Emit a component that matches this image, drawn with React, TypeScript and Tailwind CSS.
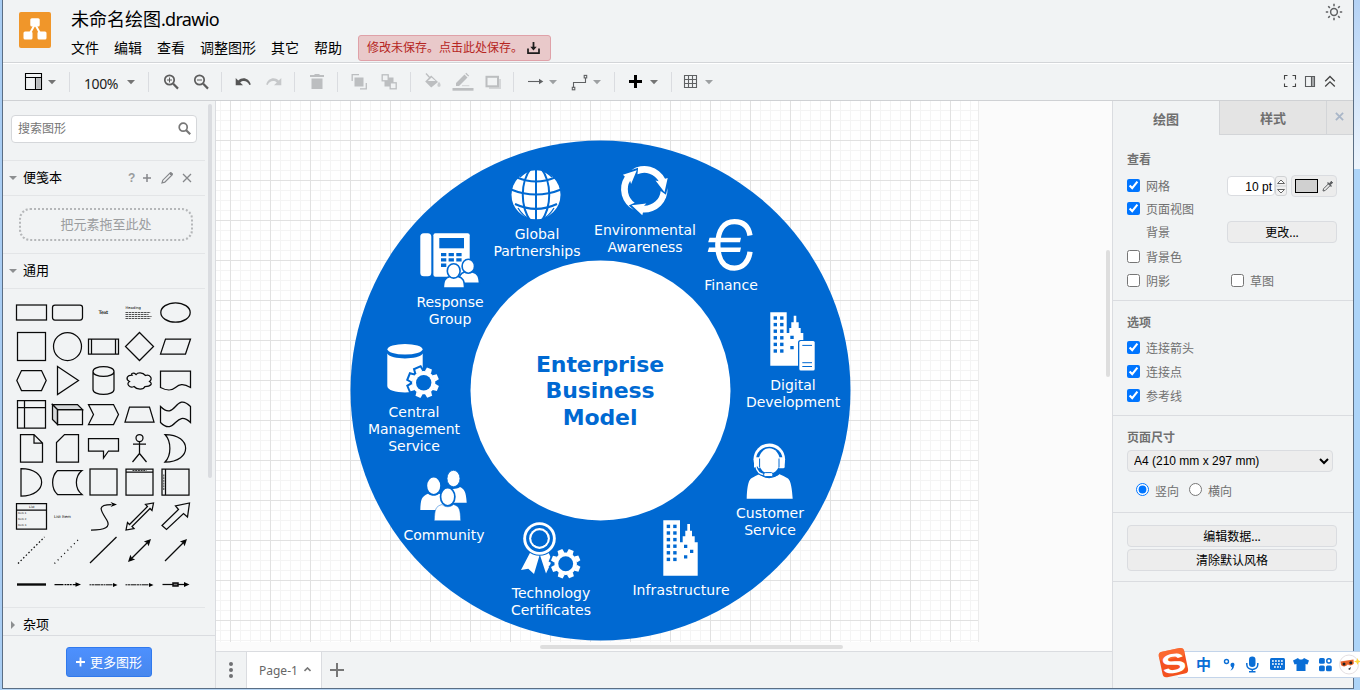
import React from 'react';

const BLUE = '#0069d2';

interface NodeLabel {
  lines: string[];
  place: string;
}

const nodeLabels: NodeLabel[] = [
  { lines: ['Global', 'Partnerships'], place: 'left-[261px] top-[125px]' },
  { lines: ['Environmental', 'Awareness'], place: 'left-[369px] top-[121px]' },
  { lines: ['Finance'], place: 'left-[455px] top-[176px]' },
  { lines: ['Digital', 'Development'], place: 'left-[517px] top-[276px]' },
  { lines: ['Customer', 'Service'], place: 'left-[494px] top-[404px]' },
  { lines: ['Infrastructure'], place: 'left-[405px] top-[481px] tracking-[0.1px]' },
  { lines: ['Technology', 'Certificates'], place: 'left-[275px] top-[484px]' },
  { lines: ['Community'], place: 'left-[168px] top-[426px]' },
  { lines: ['Central', 'Management', 'Service'], place: 'left-[138px] top-[303px]' },
  { lines: ['Response', 'Group'], place: 'left-[174px] top-[193px]' },
];

// Toolbar icon, drawn around its own centre
const Icon = ({ children, className = '' }: { children: React.ReactNode; className?: string }) => (
  <svg className={`shrink-0 ${className}`} width="26" height="36" viewBox="-13 -18 26 36" fill="none" stroke="none">
    {children}
  </svg>
);

const Caret = ({ color = '#747474', className = '' }: { color?: string; className?: string }) => (
  <svg className={`shrink-0 ${className}`} width="8" height="36" viewBox="-4 -18 8 36">
    <path d="M-4 -2H4L0 2.3Z" fill={color} />
  </svg>
);

const Group = ({ children, className }: { children: React.ReactNode; className: string }) => (
  <div className={`flex h-9 shrink-0 items-center ${className}`}>{children}</div>
);

const Separator = () => <div className="h-5 w-px shrink-0 bg-[#dadce0]" />;

const Header = () => (
  <header className="flex h-[63px] shrink-0 border-b border-[#d3d5d8] pl-4">
    <svg className="mt-3 shrink-0" width="32" height="36" viewBox="0 0 32 36">
      <rect width="32" height="36" rx="2" fill="#f0962a" />
      <path d="M16 12L9 25M16 12L23 25" stroke="#fff" strokeWidth="2" />
      <rect x="11.3" y="6.3" width="9.4" height="8.2" rx="1.5" fill="#fff" />
      <rect x="4.5" y="19.5" width="9" height="8" rx="1.5" fill="#fff" />
      <rect x="18.5" y="19.5" width="9" height="8" rx="1.5" fill="#fff" />
    </svg>
    <div className="ml-5 flex flex-col">
      <div className="mt-1 h-[31px] text-[18px] leading-[31px] text-black">
        未命名绘图<span className="tracking-[-0.7px]">.drawio</span>
      </div>
      <nav className="flex h-[26px] items-center gap-[15px] text-[14px] leading-none text-black">
        <span>文件</span>
        <span>编辑</span>
        <span>查看</span>
        <span>调整图形</span>
        <span>其它</span>
        <span>帮助</span>
        <div className="ml-px flex h-[26px] w-[193px] items-center rounded-[3px] border border-[#dfa1a8] bg-[#e9c9ca] pl-2 text-[12px] text-[#b62623]">
          <span>修改未保存。点击此处保存。</span>
          <svg className="ml-1" width="13" height="14" viewBox="0 0 13 14" fill="none" stroke="#1c1c1c">
            <path d="M1 7.5V12.2H12V7.5" strokeWidth="1.7" />
            <path d="M6.5 1V8" strokeWidth="1.8" />
            <path d="M3.3 5.8H9.7L6.5 9.6Z" fill="#1c1c1c" stroke="none" />
          </svg>
        </div>
      </nav>
    </div>
    <svg className="ml-auto mr-[10px] mt-[3px]" width="18" height="18" viewBox="-9 -9 18 18" fill="none" stroke="#5f6163" strokeWidth="1.5">
      <circle r="3.4" />
      {[0, 45, 90, 135, 180, 225, 270, 315].map((angle) => (
        <path key={angle} d="M0 -5.8V-8.2" transform={`rotate(${angle})`} />
      ))}
    </svg>
  </header>
);

const Toolbar = () => (
  <div className="flex h-[38px] shrink-0 items-center border-b border-[#cfd1d4] border-t border-t-white">
    <Group className="w-[66px] pl-[17px]">
      <Icon>
        <path d="M-7.5 -8.5H8.5V7.5H-7.5ZM-7.5 -4.5H8.5M2.5 -4.5V7.5" stroke="#000" strokeWidth="1.1" />
        <rect x="3.2" y="-4" width="4.6" height="10.8" fill="#b9bbbd" />
      </Icon>
      <Caret className="ml-[2px]" />
    </Group>
    <Separator />
    <Group className="w-[78px] pl-[14px]">
      <span className="w-[43px] pt-[3px] text-[14px] tracking-[-0.4px] text-[#222]">100%</span>
      <Caret />
    </Group>
    <Separator />
    <Group className="w-[72px] gap-1 pl-[9px]">
      <Icon>
        <circle cx="-1.5" cy="-2" r="4.7" stroke="#5c5c5c" strokeWidth="1.7" />
        <path d="M2.2 1.8L7 6.6" stroke="#5c5c5c" strokeWidth="2.2" />
        <path d="M-4 -2H1M-1.5 -4.5V.5" stroke="#5c5c5c" />
      </Icon>
      <Icon>
        <circle cx="-1.5" cy="-2" r="4.7" stroke="#5c5c5c" strokeWidth="1.7" />
        <path d="M2.2 1.8L7 6.6" stroke="#5c5c5c" strokeWidth="2.2" />
        <path d="M-4 -2H1" stroke="#5c5c5c" />
      </Icon>
    </Group>
    <Separator />
    <Group className="w-[72px] gap-[5px] pl-2">
      <Icon>
        <path d="M-7.3 -4V3.3H0L-2.8 .4C0 -2 4.5 -1.5 6.4 3.1L7.8 2.4C6 -3.6 0 -5.6 -4.8 -1.6Z" fill="#555" />
      </Icon>
      <Icon>
        <path d="M7.3 -4V3.3H0L2.8 .4C0 -2 -4.5 -1.5 -6.4 3.1L-7.8 2.4C-6 -3.6 0 -5.6 4.8 -1.6Z" fill="#c6c8ca" />
      </Icon>
    </Group>
    <Separator />
    <Group className="w-[42px] pl-[9px]">
      <Icon>
        <path d="M-7 -7H-3L-2 -8H2L3 -7H7V-5H-7ZM-5.5 -3.5H5.5V7H-5.5Z" fill="#bcbec0" />
      </Icon>
    </Group>
    <Separator />
    <Group className="w-[72px] gap-1 pl-2">
      <Icon>
        <rect x="-4.5" y="-4.5" width="9" height="9" fill="#bcbec0" />
        <path d="M-6.8 -1V-7.3H0M7.3 1V6.8H1" stroke="#bcbec0" strokeWidth="1.3" />
      </Icon>
      <Icon>
        <rect x="-4.5" y="-4.5" width="9" height="9" fill="#bcbec0" />
        <rect x="-6.8" y="-7.2" width="6" height="6" fill="#f1f3f4" stroke="#bcbec0" strokeWidth="1.3" />
        <rect x="1.2" y=".8" width="6" height="6" fill="#f1f3f4" stroke="#bcbec0" strokeWidth="1.3" />
      </Icon>
    </Group>
    <Separator />
    <Group className="w-[102px] gap-1 pl-[9px]">
      <Icon>
        <path d="M-1.8 -6.5L5 0L-1.8 5.5L-7.8 -.5Z" fill="#bcbec0" />
        <path d="M-7 -8.5L-2 -3" stroke="#bcbec0" strokeWidth="1.3" />
        <path d="M-1.5 -4.6L2.5 -1H-5.2Z" fill="#f1f3f4" />
        <path d="M6 -.3C8.2 2.2 8 4.8 6 4.8S3.8 2.2 6 -.3Z" fill="#cbcdcf" />
      </Icon>
      <Icon>
        <path d="M-7 4V1L1.5 -7.5L4.5 -4.5L-4 4ZM2.3 -8.3L3.3 -9.2L6.2 -6.3L5.3 -5.4Z" fill="#bcbec0" />
        <path d="M-1 3.7H6.3" stroke="#d0d2d4" />
        <rect x="-10.5" y="6" width="21" height="2.7" fill="#bcbec0" />
      </Icon>
      <Icon>
        <rect x="-4" y="-3" width="12" height="10" fill="#d4d6d8" />
        <rect x="-6.5" y="-5.2" width="11.5" height="9.5" fill="#f1f3f4" stroke="#bcbec0" strokeWidth="2" />
      </Icon>
    </Group>
    <Separator />
    <Group className="w-[100px] pl-2">
      <Icon>
        <path d="M-7 -.5H5" stroke="#5f6163" strokeWidth="1.1" />
        <path d="M4 -3.2L8.3 -.5L4 2.2Z" fill="#5f6163" />
      </Icon>
      <Caret className="ml-px" color="#9da0a2" />
      <Icon className="ml-[9px]">
        <path d="M-5.5 5.5V.5H6.5V-4" stroke="#5f6163" strokeWidth="1.1" />
        <rect x="-6.7" y="5.3" width="2.5" height="2.5" stroke="#5f6163" strokeWidth="1.1" />
        <rect x="5.2" y="-6.6" width="2.5" height="2.5" stroke="#5f6163" strokeWidth="1.1" />
      </Icon>
      <Caret className="ml-px" color="#9da0a2" />
    </Group>
    <Separator />
    <Group className="w-[56px] pl-[7px]">
      <Icon>
        <path d="M-6 -.5H7M.5 -7V6" stroke="#000" strokeWidth="3" />
      </Icon>
      <Caret className="ml-[2px]" />
    </Group>
    <Separator />
    <Group className="w-[44px] pl-[6px]">
      <Icon>
        <path d="M-6.5 -6.5H5.5V5.5H-6.5ZM-6.5 -2.5H5.5M-6.5 1.5H5.5M-2.5 -6.5V5.5M1.5 -6.5V5.5" stroke="#5f6163" strokeWidth="1.1" />
      </Icon>
      <Caret className="ml-px" color="#9da0a2" />
    </Group>
    <div className="ml-auto mr-[10px] flex">
      <Icon className="-mr-[6px]">
        <path d="M-5.5 -2.5V-6.5H-2.5M2.5 -6.5H5.5V-2.5M5.5 1.5V4.5H2.5M-2.5 4.5H-5.5V1.5" stroke="#444" strokeWidth="1.1" />
      </Icon>
      <Icon className="-mr-[6px]">
        <rect x="1.5" y="-5" width="3" height="9" fill="#a7a9ab" />
        <path d="M-4.5 -5.5H4.5V4.5H-4.5ZM1.5 -5.5V4.5" stroke="#5a5c5e" strokeWidth="1.1" />
      </Icon>
      <Icon>
        <path d="M-4.8 -.8L0 -5.5L4.8 -.8M-4.8 4.5L0 -.2L4.8 4.5" stroke="#444" strokeWidth="1.3" />
      </Icon>
    </div>
  </div>
);

// Small captions inside the palette thumbnails
const tiny = "font-['DejaVu_Sans']";

const palette: React.ReactNode[] = [
  <rect x="-15" y="-7.5" width="30" height="15" />,
  <rect x="-15" y="-7.5" width="30" height="15" rx="2.5" />,
  <text className={tiny} y="1.5" fontSize="4.6" textAnchor="middle" fill="#000" stroke="#000" strokeWidth=".15">Text</text>,
  <g>
    <text className={tiny} x="-14" y="-4" fontSize="3.7" fill="#000" stroke="none">Heading</text>
    <path d="M-14 0H11M-14 2H9M-14 4H12M-14 6H11" strokeDasharray="2.5 .6" strokeWidth=".7" />
  </g>,
  <ellipse rx="14.7" ry="9.7" />,
  <rect x="-14" y="-14" width="28" height="28" />,
  <circle r="14" />,
  <path d="M-15 -7.5H15V7.5H-15ZM-12 -7.5V7.5M12 -7.5V7.5" />,
  <path d="M0 -14L14 0L0 14L-14 0Z" />,
  <path d="M-10 -7.5H15L10 7.5H-15Z" />,
  <path d="M-10 -10H10L14.7 0L10 10H-10L-14.7 0Z" />,
  <path d="M-10 -14L11 0L-10 14Z" />,
  <path d="M-10.5 -9C-10.5 -15.5 10.5 -15.5 10.5 -9V9C10.5 15.5 -10.5 15.5 -10.5 9ZM-10.5 -9C-10.5 -2.5 10.5 -2.5 10.5 -9" />,
  <path d="M-7.5 -5.5C-13 -5.5 -14 -1 -10 1C-14 3.5 -9.5 8 -5.5 6C-2.5 9.5 4 9.5 5.5 6C11.5 6 13.5 3 10 1C14 -2 10 -6.5 6 -5C3 -8.5 -2 -8 -3.5 -6C-5.5 -8 -9 -7.5 -7.5 -5.5Z" />,
  <path d="M-15 -9.5H15V7C7.5 2.5 3.7 4 0 7S-7.5 11 -15 7Z" />,
  <path d="M-14 -14H14V13.5H-14ZM-14 -7H14M-7 -14V13.5" />,
  <g>
    <path d="M-15 -10H10L15 -5H-10ZM-15 -10L-10 -5V10L-15 5Z" fill="#d6d8da" />
    <path d="M-10 -5H15V10H-10Z" />
  </g>,
  <path d="M-15 -10H10L15 0L10 10H-15L-10 0Z" />,
  <path d="M-10 -7.5H10L14.5 7.5H-14.5Z" />,
  <path d="M-15 -8C-7.5 -.5 -3.5 -4 0 -8S7.5 -15.5 15 -8V8C7.5 1 3.5 4.5 0 8S-7.5 15.5 -15 8Z" />,
  <path d="M-11 -14H2.5L11 -5.5V13.5H-11ZM2.5 -14V-5.5H11" />,
  <path d="M-3 -14H11V13.5H-11V-6Z" />,
  <path d="M-15 -10H15V2.5H5L0 9.5V2.5H-15Z" />,
  <path d="M0 -7V5M-6.5 -4.5H6.5M0 5L-7 13.5M0 5L7 13.5M3.5 -10.5A3.5 3.5 0 1 1 -3.5 -10.5A3.5 3.5 0 1 1 3.5 -10.5" />,
  <path d="M-10.5 -14C17 -14 17 13.5 -10.5 13.5C-4 7 -4 -7 -10.5 -14Z" />,
  <path d="M-10.5 -14C17 -14 17 13.5 -10.5 13.5Z" />,
  <path d="M-10 -12H14.5C7 -6 7 6 14.5 12H-10C-16.5 6 -16.5 -6 -10 -12Z" />,
  <rect x="-13.5" y="-13.5" width="27" height="26" />,
  <g>
    <path d="M-13.5 -13.5H13.5V12.5H-13.5ZM-13.5 -10.5H13.5" />
    <path d="M-7 -12H7" strokeDasharray="2 .7" strokeWidth=".8" />
  </g>,
  <g>
    <path d="M-13.5 -13.5H13.5V12.5H-13.5ZM-10 -13.5V12.5" />
    <path d="M-11.7 -8V8" strokeDasharray="2 .7" strokeWidth=".8" />
  </g>,
  <g>
    <path d="M-15 -13H15V12.5H-15ZM-15 -6.5H15" />
    <g className={tiny} fill="#000" stroke="none" fontSize="3.2">
      <text x="-2.5" y="-9">List</text>
      <text x="-13.5" y="-2.5" fontSize="2.6">Item 1</text>
      <text x="-13.5" y="3.5" fontSize="2.6">Item 2</text>
      <text x="-13.5" y="9.5" fontSize="2.6">Item 3</text>
    </g>
  </g>,
  <text className={tiny} x="-13.5" y="1" fontSize="3.9" fill="#000" stroke="none">List Item</text>,
  <g>
    <path d="M-12.5 13.5C1 13.5 8 11 3 3S-8 -12 8 -12" />
    <path d="M13.5 -12L7 -14.5L9 -12L7 -9.5Z" fill="#000" stroke="none" />
  </g>,
  <path d="M-13.5 13.5L-12 6L-10 8L8 -10L6 -12L14 -13.5L12.5 -6L10.5 -8L-7.5 10L-5.5 12Z" />,
  <path d="M-13.5 9L3 -7L0 -10.5L14 -13.5L12 .5L8 -3L-9 13Z" />,
  <path d="M-13.5 13L13 -13.5" strokeDasharray="1.5 2.2" />,
  <path d="M-13 13L13 -13" strokeDasharray="1 3.6" />,
  <path d="M-13.5 12.5L13 -13.5" />,
  <g>
    <path d="M-9 9L9 -9" />
    <path d="M-10.5 10.5L-9 6L-8 8L-6 9ZM10.5 -10.5L9 -6L8 -8L6 -9Z" fill="#000" />
  </g>,
  <g>
    <path d="M-10.5 10.5L9 -9" />
    <path d="M10.5 -10.5L9 -6L8 -8L6 -9Z" fill="#000" />
  </g>,
  <path d="M-14.5 0H14.5" strokeWidth="2.4" />,
  <g>
    <path d="M-13 0H9" strokeDasharray="9 1 2 .6 2 .6 2 1 9" />
    <path d="M13.5 0L8 -2.3V2.3Z" fill="#000" stroke="none" />
  </g>,
  <g>
    <path d="M-14 .3H10" strokeDasharray="2 .5 2 .5 6 .5" strokeWidth="1" />
    <path d="M14 .5L9.5 -1.5V2.5Z" fill="#000" stroke="none" />
  </g>,
  <g>
    <path d="M-14 .3H10" strokeDasharray="2 .5 2 .5 6 .5" strokeWidth="1" />
    <path d="M14 .5L9.5 -1.5V2.5Z" fill="#000" stroke="none" />
  </g>,
  <g>
    <path d="M-13 0H9" />
    <path d="M14 0L8.5 -2.5V2.5Z" fill="#000" stroke="none" />
    <rect x="-2.5" y="-1.5" width="5" height="3" fill="#777" strokeWidth="1.5" />
  </g>,
];

const Triangle = ({ open }: { open?: boolean }) => (
  <svg className="shrink-0" width="8" height="8" viewBox="0 0 8 8" fill="#8d8f91">
    <path d={open ? 'M0 2H8L4 6Z' : 'M2 0V8L6 4Z'} />
  </svg>
);

const Sidebar = () => (
  <aside className="flex w-[213px] shrink-0 flex-col border-r border-[#dadce0]">
    <div className="flex h-[534px] overflow-hidden">
      <div className="w-[202px] shrink-0">
        <div className="flex h-[60px] border-b border-[#e3e5e7] pl-2 pt-[14px]">
          <div className="flex h-7 w-[186px] items-center justify-between rounded-[4px] border border-[#d5d7da] bg-white pl-[6px] pr-[5px] text-[12px] text-[#757575]">
            <span>搜索图形</span>
            <svg className="-mt-px" width="13" height="13" viewBox="0 0 13 13" fill="none" stroke="#777">
              <circle cx="5.2" cy="5.2" r="4" strokeWidth="1.7" />
              <path d="M8 8L12.2 12.2" strokeWidth="2.2" />
            </svg>
          </div>
        </div>
        <div className="flex h-[35px] items-center border-b border-[#e3e5e7] pl-[6px]">
          <Triangle open />
          <span className="ml-[6px] w-[105px] text-[13px] text-black">便笺本</span>
          <span className="font-['Liberation_Sans'] text-[12px] font-bold text-[#9a9c9e]">?</span>
          <svg className="ml-[7px]" width="50" height="14" viewBox="0 0 50 14" fill="none" stroke="#85878a">
            <path d="M1 7H9M5 3V11" strokeWidth="1.5" />
            <path d="M20 12L20.8 9.2L28 2L30 4L22.8 11.2Z" strokeWidth="1.2" />
            <path d="M27.5 2.5L29 1.3L30.7 3L29.5 4.5Z" fill="#85878a" />
            <path d="M41 3L49 11M49 3L41 11" strokeWidth="1.3" />
          </svg>
        </div>
        <div className="flex h-[58px] border-b border-[#e3e5e7] pl-4 pt-3">
          <div className="flex h-[33px] w-[174px] items-center justify-center rounded-[11px] border-2 border-dotted border-[#b5b7b9] text-[13px] text-[#9b9d9f]">
            把元素拖至此处
          </div>
        </div>
        <div className="flex h-[35px] items-center border-b border-[#e3e5e7] pl-[6px]">
          <Triangle open />
          <span className="ml-[6px] text-[13px] text-black">通用</span>
        </div>
        <div className="h-[319px] border-b border-[#e3e5e7] pl-[10px] pt-[6px]">
          <div className="grid w-[180px] grid-cols-5">
            {palette.map((shape, index) => (
              <svg key={index} width="36" height="34" viewBox="-18.5 -17.5 36 34" fill="none" stroke="#0a0a0a" strokeWidth="1.25">
                {shape}
              </svg>
            ))}
          </div>
        </div>
        <div className="flex h-[34px] items-center pl-[6px]">
          <Triangle />
          <span className="ml-[6px] text-[13px] text-black">杂项</span>
        </div>
      </div>
      <div className="ml-[3px] mt-[3px] h-[374px] w-1 rounded-full bg-[#dadce0]" />
    </div>
    <div className="flex flex-1 justify-center border-t border-[#dadce0] pt-[11px]">
      <button className="flex h-[30px] w-[86px] items-center justify-center gap-[5px] rounded-[3px] border border-[#3079ed] bg-gradient-to-b from-[#4d90fe] to-[#4787ed] text-[13px] text-white">
        <svg width="9" height="10" viewBox="0 0 9 10" stroke="#fff" strokeWidth="1.8">
          <path d="M0 5H9M4.5 .5V9.5" />
        </svg>
        <span className="pt-[2px]">更多图形</span>
      </button>
    </div>
  </aside>
);

const Gear = ({ x, y, r = 15.3 }: { x: number; y: number; r?: number }) => (
  <g transform={`translate(${x} ${y}) scale(${r / 15.3})`}>
    {[BLUE, '#fff'].map((color, i) => (
      <g key={color} fill={color} stroke={color} strokeWidth={i === 0 ? 4 : 0}>
        <circle r="11.6" />
        {[22, 67, 112, 157, 202, 247, 292, 337].map((angle) => (
          <path key={angle} d="M-3.3 -11L-2.7 -15.3H2.7L3.3 -11Z" transform={`rotate(${angle})`} />
        ))}
      </g>
    ))}
    <circle r="7.7" fill={BLUE} />
  </g>
);

const Windows = ({ x, y }: { x: number; y: number }) => (
  <g fill={BLUE}>
    {[0, 1, 2, 3, 4, 5].map((row) => (
      <g key={row}>
        <rect x={x} y={y + row * 6.6} width="3.4" height="3.4" />
        <rect x={x + 6.5} y={y + row * 6.6} width="3.4" height="3.4" />
      </g>
    ))}
  </g>
);

const Artwork = () => (
  <svg className="absolute left-[134px] top-[39px]" width="502" height="502" viewBox="350 140 502 502" fill="#fff">
    <circle cx="600.5" cy="390.5" r="250" fill={BLUE} />
    <circle cx="600.5" cy="390.5" r="130" />

    {/* Global Partnerships */}
    <circle cx="536" cy="194.8" r="24.5" />
    <g fill="none" stroke={BLUE} strokeWidth="2">
      <path d="M536 169V221M511 189.5C527 196 545 196 561 189.5M515 204C529 210.5 543 210.5 557 204M517 177.5C530 183 542 183 555 177.5" />
      <path d="M531 168C520 183 520 206 531 222M541 168C552 183 552 206 541 222" />
      <path d="M530 170.5C526 171.5 523 174 520 177M542 170.5C546 171.5 549 174 552 177M530 219C526 217.5 521 213 518 208M542 219C546 217.5 551 213 554 208" strokeWidth="1.3" />
    </g>

    {/* Environmental Awareness */}
    <g transform="translate(644.3 189.3)">
      {[0, 120, 240].map((angle) => (
        <path
          key={angle}
          d="M-12.8 -19.4A23.3 23.3 0 0 1 20.8 -10.5L23.4 -11.2L20.2 3L11.2 -8.8L14.4 -8A16.4 16.4 0 0 0 -6.8 -15L-6.2 -21.5Z"
          transform={`rotate(${angle})`}
        />
      ))}
    </g>

    {/* Finance */}
    <path
      d="M750 235.5C748.5 226 742.5 221.7 734.500 221.700C724 221.700 717.800 230 717.800 244.900S724 268.100 734.500 268.100C742.500 268.100 748.800 262 750 251.700"
      fill="none"
      stroke="#fff"
      strokeWidth="5.300"
    />
    <path d="M709.500 237.700H741L740 242.200H708.200ZM709 247.600H741L740 252H707.700Z" />

    {/* Digital Development */}
    <path d="M770.3 312.3H786.7V333H789.3V328H791.3V322.3H793.7V315.7H796.3V322.3H798.7V328H800.7V333H803.3V365.7H770.3Z" />
    <Windows x={773.6} y={316.3} />
    <path d="M790.3 335.7H793.7V339H790.3ZM790.3 346H793.7V349.3H790.3Z" fill={BLUE} />
    <rect x="798" y="340" width="17.7" height="31.3" rx="2.5" fill={BLUE} />
    <rect x="799.3" y="341" width="15.4" height="29.5" rx="1.5" />
    <path d="M802.3 345.4H812M802.3 362.7H812M802.3 366.5H812" stroke={BLUE} strokeWidth="1" />

    {/* Customer Service */}
    <path d="M746.7 498.7C747 489 748 481 751 478.5C754 476.5 757 475.5 759.5 474C764 479.5 774.5 479.5 779 474C782 475.5 785 476.5 788 478.5C791 481 792 489 792.7 498.7Z" />
    <circle cx="769.3" cy="459.3" r="15.8" />
    <circle cx="769.3" cy="460" r="13.3" fill={BLUE} />
    <path d="M752 466H787V472L780 473.5C776 478.5 763 478.5 758.5 473.5L752 472Z" fill={BLUE} />
    <ellipse cx="769.3" cy="461" rx="10.6" ry="12.7" />
    <rect x="754" y="457.3" width="6.5" height="11" rx="1.5" />
    <rect x="778.2" y="457.3" width="6.5" height="11" rx="1.5" />
    <path d="M759.6 458.5V467.5M779 458.5V467.5" stroke={BLUE} strokeWidth="1" />
    <path d="M756 467C757 471.5 760 474.5 765.5 474.8" fill="none" stroke={BLUE} strokeWidth="3.5" />
    <path d="M756 467C757 471.5 760 474.5 765.5 474.8" fill="none" stroke="#fff" strokeWidth="1.3" />
    <rect x="763.7" y="472.6" width="9.2" height="4" rx="1.5" stroke={BLUE} />

    {/* Infrastructure */}
    <path d="M663.3 520.3H680V542.3H682.7V536.3H685.3V530.7H687.3V524H690V530.7H692V536.3H694.7V542.3H697.7V575.7H663.3Z" />
    <Windows x={666.7} y={524.7} />
    <path d="M684 544.7H687.3V548H684ZM690 549.7H693.3V553H690ZM684 555.3H687.3V558.6H684Z" fill={BLUE} />

    {/* Technology Certificates */}
    <path d="M530.7 551.5L521 570L528.3 568.7L534 574L539.8 554.5L546 573.5L550 565L552 560L548 551.5Z" />
    <circle cx="539.5" cy="538.5" r="17.3" fill={BLUE} />
    <circle cx="539.5" cy="538.5" r="16.3" />
    <circle cx="539.5" cy="538.5" r="13.4" fill={BLUE} />
    <circle cx="539.5" cy="538.5" r="10.4" />
    <circle cx="539.5" cy="538.5" r="8.3" fill={BLUE} />
    <Gear x={565.7} y={563.7} r={14.8} />

    {/* Community */}
    <path d="M447 502.7V490C450 488 456 490 460 487C464 489 466 491 466.7 502.7Z" />
    <ellipse cx="453.5" cy="478.5" rx="6.5" ry="8.2" stroke={BLUE} strokeWidth=".8" />
    <path d="M420.3 510C420.8 499 421.5 496.5 428 493.7C431.5 496.5 436 496.5 439 493.7C443 495 444.5 497 445 510Z" />
    <ellipse cx="433.7" cy="485.7" rx="6.5" ry="8.2" />
    <ellipse cx="447.7" cy="496.7" rx="8" ry="10" fill={BLUE} />
    <path d="M434.3 520.7C434.8 509 435.5 506.5 442 504.5C445.5 507.5 450 507.5 453.5 504.5C459.5 506.5 460.2 509 460.7 520.7Z" stroke={BLUE} strokeWidth=".5" />
    <ellipse cx="447.7" cy="496.7" rx="6.3" ry="8.2" />

    {/* Central Management Service */}
    <path d="M387.3 353.5C391 360 419 360 422.7 353.5V386C422.7 394.5 387.3 394.5 387.3 386Z" />
    <ellipse cx="405" cy="349.3" rx="17.5" ry="5.3" />
    <Gear x={423.7} y={382.7} />

    {/* Response Group */}
    <rect x="420.3" y="233.3" width="11" height="43" rx="3.5" />
    <rect x="433.4" y="233.3" width="36.3" height="43.4" rx="2" />
    <rect x="439.3" y="238" width="24.7" height="10.3" fill={BLUE} />
    <path d="M441 253H446.3V256.3H441ZM448.6 253H453.9V256.3H448.6ZM456.3 253H461.6V256.3H456.3ZM441 258.3H446.3V261.6H441ZM448.6 258.3H453.9V261.6H448.6ZM456.3 258.3H461.6V261.6H456.3ZM441 263.6H446.3V267H441Z" fill={BLUE} />
    <g stroke={BLUE} strokeWidth="1.6">
      <path d="M459 283.3C459 276 460 273.5 464.5 272H472.5C478 273.5 479 276 479.5 283.3Z" />
      <ellipse cx="468.3" cy="266.2" rx="6.2" ry="7" />
      <path d="M443.3 288C443.6 281 444.5 278 450 276.5H458C463.5 278 464.3 281 464.6 288Z" />
      <ellipse cx="453.7" cy="270.9" rx="6.4" ry="7.2" />
    </g>
  </svg>
);

const Canvas = () => (
  <section className="relative h-[550px] overflow-hidden bg-[#fbfbfb]">
    <svg className="block" width="764" height="541" viewBox="0 0 764 541">
      <defs>
        <pattern id="grid" width="40" height="40" patternUnits="userSpaceOnUse" x="14" y="39">
          <path d="M10.5 0V40M20.5 0V40M30.5 0V40M0 10.5H40M0 20.5H40M0 30.5H40" fill="none" stroke="#f4f4f4" />
          <path d="M.5 0V40M0 .5H40" fill="none" stroke="#e1e1e1" />
        </pattern>
      </defs>
      <rect width="763" height="541" fill="#fff" />
      <rect width="763" height="541" fill="url(#grid)" />
      <path d="M762.5 0V541" stroke="#ececec" />
    </svg>
    <Artwork />
    {nodeLabels.map((label) => (
      <div
        key={label.lines.join(' ')}
        className={`absolute w-[120px] text-center font-['DejaVu_Sans'] text-[14px] leading-[17px] text-white ${label.place}`}
      >
        {label.lines.map((line) => (
          <div key={line}>{line}</div>
        ))}
      </div>
    ))}
    <div className="absolute left-[304px] top-[251px] w-[160px] text-center font-['DejaVu_Sans'] text-[22px] font-bold leading-[26.4px] tracking-[-0.1px] text-[#0069d2]">
      Enterprise Business Model
    </div>
    <div className="absolute left-[324px] top-[544px] h-1 w-[303px] rounded-full bg-[#dedede]" />
    <div className="absolute left-[890px] top-[149px] h-[127px] w-1 rounded-full bg-[#dedede]" />
  </section>
);

const PageTabs = () => (
  <div className="flex flex-1 border-t border-[#dadce0]">
    <div className="flex w-[31px] items-center justify-center border-r border-[#dadce0]">
      <svg width="4" height="18" viewBox="0 0 4 18" fill="#6f7173">
        <circle cx="2" cy="3" r="2" />
        <circle cx="2" cy="9" r="2" />
        <circle cx="2" cy="15" r="2" />
      </svg>
    </div>
    <div className="flex w-[75px] items-center border-r border-[#dadce0] bg-white pl-[12px] pt-[2px] text-[12px] text-[#666]">
      <span className="w-[45px]">Page-1</span>
      <svg className="-mt-1" width="7" height="5" viewBox="0 0 7 5" fill="none" stroke="#777" strokeWidth="1.6">
        <path d="M.5 4L3.5 1L6.5 4" />
      </svg>
    </div>
    <svg className="ml-2 self-center" width="14" height="14" viewBox="0 0 14 14" stroke="#777" strokeWidth="2">
      <path d="M0 7H14M7 0V14" />
    </svg>
  </div>
);

const Check = ({ label, checked = false, className = 'h-6' }: { label: string; checked?: boolean; className?: string }) => (
  <label className={`flex items-center gap-[6px] ${className}`}>
    <input type="checkbox" className="m-0 -mt-px h-[13px] w-[13px]" defaultChecked={checked} />
    <span className="pt-px">{label}</span>
  </label>
);

const FormatPanel = () => (
  <aside className="flex w-[241px] shrink-0 flex-col border-l border-[#dadce0] text-[12px] leading-4 text-[#707070]">
    <div className="flex h-[34px] text-[13px] font-bold">
      <div className="w-[106px] pt-[10px] text-center">绘图</div>
      <div className="w-[108px] border-b border-l border-r border-[#d3d5d8] bg-[#e4e4e4] pt-[9px] text-center">样式</div>
      <div className="flex flex-1 items-center justify-center border-b border-[#d3d5d8] bg-[#e4e4e4]">
        <svg className="-ml-px -mt-[3px]" width="9" height="9" viewBox="0 0 10 10" stroke="#a9b6c8" strokeWidth="2">
          <path d="M1 1L9 9M9 1L1 9" />
        </svg>
      </div>
    </div>

    <div className="h-[166px] border-b border-[#dadce0] pl-[14px] pr-4 pt-3">
      <div className="flex h-6 items-center pt-[2px] font-bold">查看</div>
      <div className="flex h-[30px] items-center">
        <Check label="网格" checked className="w-[100px]" />
        <div className="flex h-[20px] w-[48px] items-center justify-end rounded-[4px] border border-[#dadce0] bg-white pr-[2px] pt-px font-['Liberation_Sans'] text-[12px] text-black">10 pt</div>
        <svg width="12" height="20" viewBox="0 0 12 20" fill="none" stroke="#666">
          <rect x=".5" y=".5" width="11" height="19" rx="2.5" fill="#f0f0f0" stroke="#d0d2d4" />
          <path d="M0 10H12" stroke="#d0d2d4" />
          <path d="M2.5 7.5H9.5L6 4ZM2.5 13.5H9.5L6 17Z" fill="#fff" />
        </svg>
        <div className="ml-1 flex h-[22px] w-[46px] items-center rounded-[4px] border border-[#dadce0] bg-[#ececec] pl-[3px]">
          <div className="h-[14px] w-[23px] border border-black bg-[#d0d0d0]" />
          <svg className="ml-1" width="12" height="12" viewBox="0 0 12 12" fill="none" stroke="#5c5e60">
            <path d="M1 11L1.5 8.8L6.5 3.8L8.2 5.5L3.2 10.5Z" />
            <path d="M5.5 2.5L9.5 6.5" strokeWidth="1.3" />
            <path d="M7.5 3.5L9.3 1.3L10.7 2.7L8.5 4.5Z" fill="#5c5e60" />
          </svg>
        </div>
      </div>
      <Check label="页面视图" checked className="h-4" />
      <div className="flex h-[30px] items-center pl-[19px]">
        <span className="w-[81px] pt-px">背景</span>
        <button className="h-[22px] w-[110px] rounded-[4px] border border-[#dadce0] bg-[#ededed] pt-px text-black">更改...</button>
      </div>
      <Check label="背景色" className="h-5" />
      <div className="flex">
        <Check label="阴影" className="h-[28px] w-[104px]" />
        <Check label="草图" className="h-[28px]" />
      </div>
    </div>

    <div className="h-[115px] border-b border-[#dadce0] pl-[14px] pt-[9px]">
      <div className="mb-[2px] flex h-6 items-center pt-[2px] font-bold">选项</div>
      <Check label="连接箭头" checked />
      <Check label="连接点" checked />
      <Check label="参考线" checked />
    </div>

    <div className="h-[97px] border-b border-[#dadce0] pl-[14px] pt-[9px]">
      <div className="mb-px flex h-6 items-center pt-[2px] font-bold">页面尺寸</div>
      <select className="block h-[22px] w-[206px] rounded-[4px] border border-[#dadce0] bg-[#ededed] pl-[2px] font-['Liberation_Sans'] text-[12px] text-black">
        <option>A4 (210 mm x 297 mm)</option>
      </select>
      <div className="mt-[8px] flex h-5 items-center pl-[9px]">
        <input type="radio" name="orientation" className="m-0 -mt-px h-[13px] w-[13px]" defaultChecked />
        <span className="ml-[6px] mt-[3px] w-[34px]">竖向</span>
        <input type="radio" name="orientation" className="m-0 -mt-px h-[13px] w-[13px]" />
        <span className="ml-[6px] mt-[3px]">横向</span>
      </div>
    </div>

    <div className="flex h-[69px] flex-col gap-[2px] border-b border-[#dadce0] pl-[14px] pr-4 pt-3 text-black">
      <button className="h-[22px] rounded-[4px] border border-[#dadce0] bg-[#ededed] pt-[2px]">编辑数据...</button>
      <button className="h-[22px] rounded-[4px] border border-[#dadce0] bg-[#ededed] pt-[2px]">清除默认风格</button>
    </div>
  </aside>
);

// Floating input method bar that sits above the window
const InputMethodBar = () => (
  <div className="absolute bottom-[12px] right-0 flex h-[27px] w-[182px] items-center border-y border-[#c3d4ea] bg-white pl-[18px] text-[#0a6ed6]">
    <svg className="absolute -left-[21px] -top-[6px]" width="34" height="34" viewBox="0 0 34 34">
      <g transform="rotate(-12 17 17)">
        <rect x="3.5" y="3.5" width="26" height="26" rx="4" fill="#f4511e" />
        <rect x="3.5" y="3.5" width="26" height="9" rx="4" fill="#ff7a3c" opacity=".6" />
        <text className="font-['Liberation_Sans']" transform="translate(16.7 26.5) scale(1.35 1)" fontSize="27" fontWeight="700" fill="#fff" textAnchor="middle">S</text>
      </g>
    </svg>
    <span className="w-[25px] text-[15px] font-bold leading-none">中</span>
    <svg className="shrink-0" width="139" height="25" viewBox="0 0 139 25" fill="#0a6ed6">
      <circle cx="5.5" cy="9.5" r="2" fill="none" stroke="#0a6ed6" strokeWidth="1.4" />
      <path d="M9.5 12.5A2 2 0 1 1 13 14C12.8 16.5 11.5 18 9.3 18.5C10.5 17.5 11 16.5 11 15.3C10 15 9.5 14 9.5 12.5Z" />
      <rect x="28" y="4.5" width="6.5" height="10.5" rx="3.2" />
      <path d="M25.8 11V12.5C25.8 19 36.8 19 36.8 12.5V11M31.3 17V20M28 19.8H34.5" fill="none" stroke="#0a6ed6" strokeWidth="1.5" />
      <rect x="49" y="6" width="15" height="12" rx="1.5" />
      <path d="M51 9H62M51 12H62M53 15H60" stroke="#fff" strokeWidth="1.6" strokeDasharray="1.8 1.2" />
      <path d="M77 6C78.5 8 81.5 8 83 6L88 8.5L86.5 12.5L84.5 12V19H75.5V12L73.5 12.5L72 8.5Z" />
      <rect x="98" y="6" width="5.8" height="5.8" rx="1.5" />
      <rect x="105.8" y="6.8" width="4.2" height="4.2" rx="2" fill="none" stroke="#0a6ed6" strokeWidth="1.5" />
      <rect x="98" y="13.5" width="5.8" height="5.8" rx="1.5" />
      <rect x="105" y="13.5" width="5.8" height="5.8" rx="1.5" />
      <circle cx="128" cy="12.5" r="9.5" fill="#fff" stroke="#e4dfe2" />
      <path d="M119.5 9.5L132.5 7.5L132.8 11.5C130.5 14 128 14 127 12.3C125 15 121.5 15 120 13Z" fill="#e8622a" />
      <circle cx="123" cy="12" r="1.5" fill="#222" />
      <circle cx="129.8" cy="10.8" r="1.5" fill="#222" />
      <path d="M127 17L130 15L129 18Z" fill="#333" />
      <path d="M136.5 6L137.5 8.5L140 9.5L137.5 10.5L136.5 13L135.5 10.5L133 9.5L135.5 8.5Z" fill="#ffd83d" />
    </svg>
  </div>
);

export default function App() {
  return (
    <div className="relative flex h-[690px] w-[1360px] overflow-hidden bg-[#b7d7f7] font-['Noto_Sans','Noto_Sans_CJK_SC',sans-serif]">
      <div className="w-[2px] shrink-0 bg-[#a9cdf3]" />
      <div className="flex h-[689px] w-[1352px] flex-col border-x border-b border-[#5b6e84] bg-[#f1f3f4]">
        <Header />
        <Toolbar />
        <div className="flex min-h-0 flex-1">
          <Sidebar />
          <main className="flex min-w-0 flex-1 flex-col">
            <Canvas />
            <PageTabs />
          </main>
          <FormatPanel />
        </div>
      </div>
      <div className="flex flex-1 flex-col">
        <div className="h-[169px] bg-gradient-to-b from-[#b4d2f5] to-[#edf4fc]" />
        <div className="flex-1 bg-[#add4f8]" />
      </div>
      <InputMethodBar />
    </div>
  );
}
